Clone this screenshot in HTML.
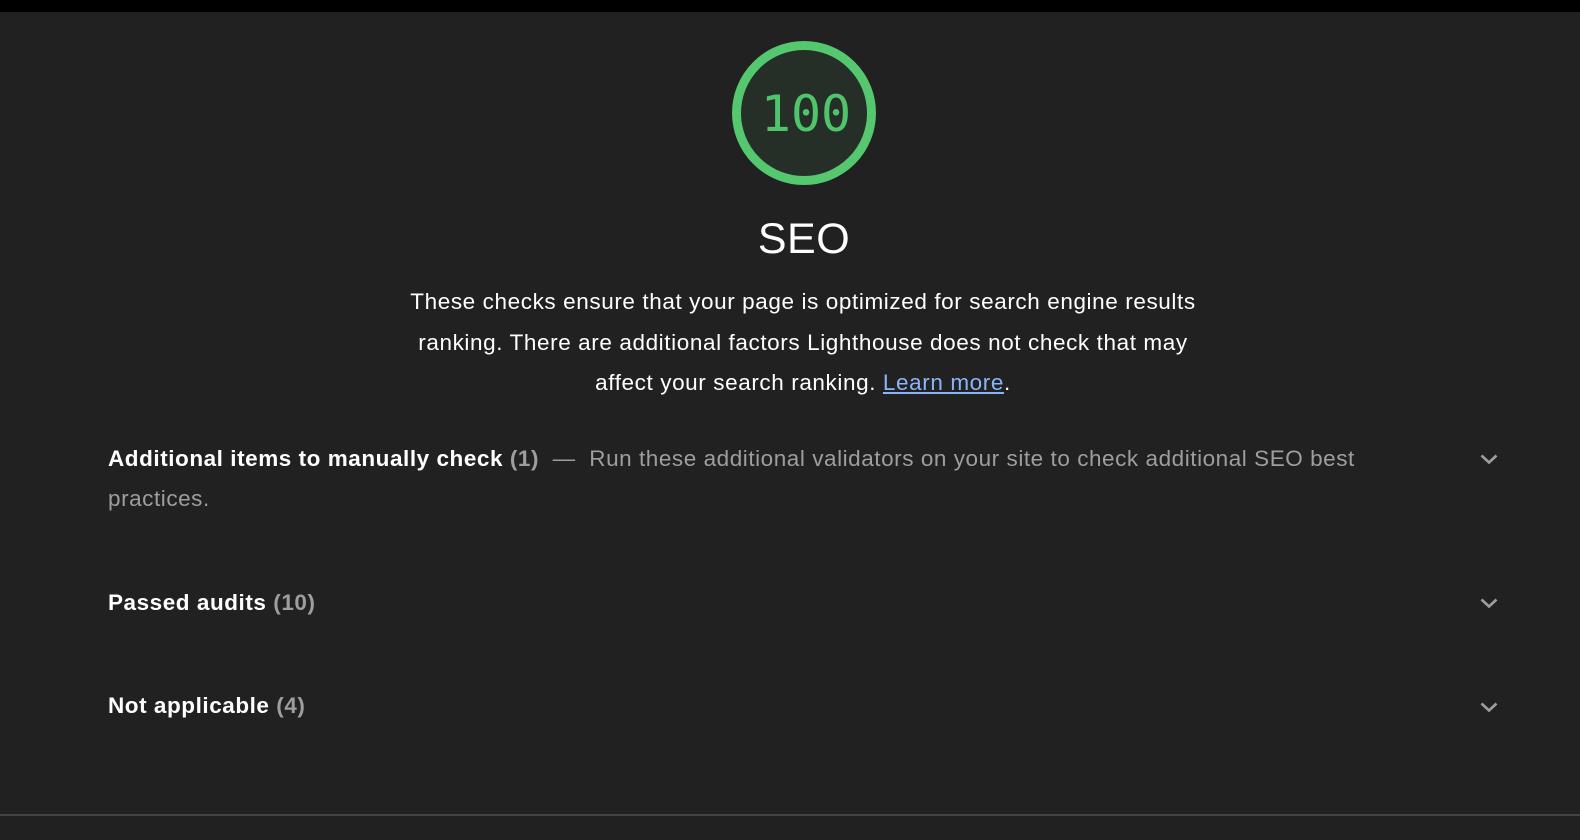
<!DOCTYPE html>
<html><head><meta charset="utf-8"><style>
html,body{margin:0;padding:0;background:#212121;width:1580px;height:840px;overflow:hidden;font-family:"Liberation Sans",Arial,sans-serif;}
.top{position:absolute;left:0;top:0;width:1580px;height:12px;background:#000;}
.gauge{position:absolute;left:732px;top:41px;width:144px;height:144px;}
.num{position:absolute;left:734px;top:84px;width:144px;text-align:center;font-family:"DejaVu Sans Mono","Liberation Mono",monospace;font-size:50px;line-height:60px;color:#4fc46a;}
.title{position:absolute;left:0;width:1608px;top:214px;text-align:center;color:#fff;font-size:43px;line-height:50px;letter-spacing:0.5px;}
.desc{position:absolute;left:393px;width:820px;top:282px;text-align:center;color:#fff;font-size:22.5px;line-height:40.5px;letter-spacing:0.6px;}
.desc a{color:#8ab4f8;text-decoration:underline;}
.row{position:absolute;left:108px;width:1300px;color:#9e9e9e;font-size:22.5px;line-height:40px;letter-spacing:0.55px;}
.row b{color:#fff;}
.row i{font-style:normal;font-weight:bold;}
.chev{position:absolute;left:1480px;width:18px;height:10px;}
.line{position:absolute;left:0;top:814px;width:1580px;height:2px;background:#444;}
</style></head><body>
<div class="top"></div>
<svg class="gauge" viewBox="0 0 144 144"><circle cx="72" cy="72" r="67.5" fill="#262e28" stroke="#55c86f" stroke-width="9"/></svg>
<div class="num">100</div>
<div class="title">SEO</div>
<div class="desc">These checks ensure that your page is optimized for search engine results ranking. There are additional factors Lighthouse does not check that may affect your search ranking. <a>Learn more</a>.</div>
<div class="row" style="top:439px"><b>Additional items to manually check</b> <i>(1)</i> &nbsp;— &nbsp;Run these additional validators on your site to check additional SEO best practices.</div>
<div class="row" style="top:583px"><b>Passed audits</b> <i>(10)</i></div>
<div class="row" style="top:686px"><b>Not applicable</b> <i>(4)</i></div>
<svg class="chev" style="top:454px" viewBox="0 0 18 10"><path d="M1.5 1.5L9 8.5L16.5 1.5" fill="none" stroke="#9e9e9e" stroke-width="2.6"/></svg>
<svg class="chev" style="top:598px" viewBox="0 0 18 10"><path d="M1.5 1.5L9 8.5L16.5 1.5" fill="none" stroke="#9e9e9e" stroke-width="2.6"/></svg>
<svg class="chev" style="top:702px" viewBox="0 0 18 10"><path d="M1.5 1.5L9 8.5L16.5 1.5" fill="none" stroke="#9e9e9e" stroke-width="2.6"/></svg>
<div class="line"></div>
</body></html>
